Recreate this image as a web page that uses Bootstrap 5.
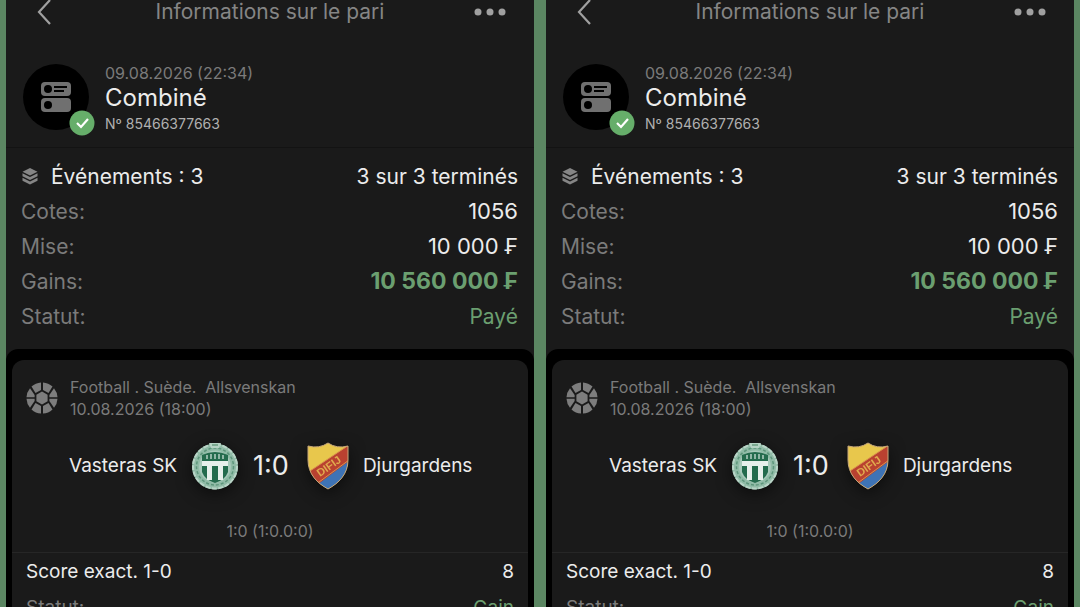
<!DOCTYPE html>
<html lang="fr">
<head>
<meta charset="utf-8">
<meta name="viewport" content="width=device-width, initial-scale=1">
<title>Informations sur le pari</title>
<link href="https://cdn.jsdelivr.net/npm/bootstrap@5.3.0/dist/css/bootstrap.min.css" rel="stylesheet">
<style>
  body { background: #5b8662; font-family: Inter, "Liberation Sans", sans-serif; color: #ececec; }
  .slips { height: 100vh; padding: 0 6px; gap: 12px; }
  .slip { background: #1a1a1a; min-width: 0; }
  .muted { color: #7b7b7b; }
  .win { color: #6b9f70; }
  .topbar { height: 24px; padding: 0 26px; color: #858585; }
  .topbar h1 { font-size: 21px; line-height: 24px; font-weight: 400; }
  .topbar .btn { color: #a0a0a0; width: 36px; height: 24px; --bs-btn-padding-x: 0; --bs-btn-padding-y: 0; border: 0; }
  .bet { padding: 40px 17px 13px; gap: 16px; border-bottom: 1px solid #131313; }
  .avatar { width: 66px; height: 66px; background: #000; }
  .tick { right: -6px; bottom: -6px; }
  .bet-date { font-size: 16px; line-height: 18px; }
  .bet-kind { font-size: 24px; line-height: 32px; }
  .bet-no { font-size: 14px; line-height: 20px; color: #b0b0b0; }
  .totals { padding: 11px 16px 15px 15px; font-size: 21px; line-height: 35px; }
  .amount { font-size: 22px; }
  .payout { font-size: 23px; }
  .events { background: #000; border-radius: 12px 12px 0 0; padding: 11px 6px 0; }
  .event { background: #1a1a1a; border-radius: 12px; }
  .event-head { padding: 16px 14px 0; gap: 12px; font-size: 16px; line-height: 22px; }
  .teams { padding: 20px 12px; gap: 14px; font-size: 19px; line-height: 52px; }
  .crest { filter: drop-shadow(0 4px 8px #0008); }
  .goals { font-size: 27px; }
  .periods { font-size: 16px; line-height: 22px; padding: 8px 0 10px; border-bottom: 1px solid #262626; }
  .pick { padding: 1px 14px 16px; font-size: 19px; line-height: 36px; }
</style>
</head>
<body class="overflow-hidden">
<svg class="position-absolute" width="0" height="0" aria-hidden="true">
  <symbol id="back" viewBox="0 0 16 26"><path d="M14 1 3 13l11 12" fill="none" stroke="currentColor" stroke-width="2.200"/></symbol>
  <symbol id="dots" viewBox="0 0 32 8"><g fill="currentColor"><circle cx="4" cy="4" r="3.500"/><circle cx="16" cy="4" r="3.500"/><circle cx="28" cy="4" r="3.500"/></g></symbol>
  <symbol id="combo" viewBox="0 0 30 30">
    <rect width="30" height="14" rx="4" fill="#707070"/><rect y="16" width="30" height="14" rx="4" fill="#707070"/>
    <circle cx="7" cy="7" r="4"/><circle cx="7" cy="23" r="4"/>
    <path d="M13 5h13M13 9h10" stroke="#000" stroke-width="2"/>
  </symbol>
  <symbol id="check" viewBox="0 0 26 26"><circle cx="13" cy="13" r="12.500" fill="#66ae6a"/><path d="m8 13 4 4 7-8" fill="none" stroke="#fff" stroke-width="2.200"/></symbol>
  <symbol id="layers" viewBox="0 0 16 17"><g fill="#858585"><path d="M8 0 15.500 3.800 8 7.600.5 3.800z"/><path d="M.5 5.200 8 9l7.500-3.800v3L8 12 .5 8.200z"/><path d="M.5 9.700 8 13.500l7.500-3.800v3L8 16.500.5 12.700z"/></g></symbol>
  <symbol id="ball" viewBox="-16 -16 32 32">
    <g fill="#7d7d7d">
      <path d="M0-6.500 5.600-3.200v6.400L0 6.500l-5.600-3.300v-6.400z"/>
      <path d="M1-15.500A15.500 15.500 0 0 1 10.500-11.400L6.500-5 1-8z"/>
      <path d="M-1-15.500A15.500 15.500 0 0 0-10.500-11.400L-6.500-5-1-8z"/>
      <path d="M1 15.500A15.500 15.500 0 0 0 10.500 11.400L6.500 5 1 8z"/>
      <path d="M-1 15.500A15.500 15.500 0 0 1-10.500 11.400L-6.500 5-1 8z"/>
      <path d="M12-9.800A15.500 15.500 0 0 1 15.500-.7L7.400-.7V-3z"/>
      <path d="M12 9.800A15.500 15.500 0 0 0 15.500.7L7.400.7V3z"/>
      <path d="M-12-9.800A15.500 15.500 0 0 0-15.500-.7L-7.400-.7V-3z"/>
      <path d="M-12 9.800A15.500 15.500 0 0 1-15.500.7L-7.400.7V3z"/>
    </g>
  </symbol>
  <symbol id="vasteras" viewBox="0 0 48 48">
    <circle cx="24" cy="24.500" r="23" fill="#8fbba6"/>
    <circle cx="24" cy="24.500" r="22" fill="none" stroke="#b9d4c7" stroke-width="2" stroke-dasharray="5 1.500"/>
    <circle cx="24" cy="24.500" r="18.500" fill="none" stroke="#5d957b" stroke-width="1.500" stroke-dasharray="3 2"/>
    <circle cx="24" cy="24.500" r="16" fill="#a9cabb"/>
    <path d="M11 13q13-6 26 0v17q-3 8-13 11-10-3-13-11z" fill="#246b4d"/>
    <path d="M16 13v4M20 12v5M24 12v5M28 12v5M32 13v4" stroke="#b5d0c3" stroke-width="1.500"/>
    <path d="M11 19h26v5h-5v14h-5V24h-6v14h-5V24h-5z" fill="#e7efeb"/>
    <path d="M18 1h12l-2 5h-8z" fill="#b6d3c4"/><path d="M21 3h6" stroke="#43815f"/>
  </symbol>
  <symbol id="djurgarden" viewBox="0 0 42 48">
    <clipPath id="shield"><path d="M1 4Q12 7 21 1 30 7 41 4V18C41 32 32 41 21 47 10 41 1 32 1 18z"/></clipPath>
    <g clip-path="url(#shield)">
      <path d="M0 0h42v48H0z" fill="#e8c74c"/><path d="M42 12v36H8V38z" fill="#3e73b5"/>
      <path d="M0 31 42 3v16L10 43z" fill="#b94130"/>
      <path d="m0 31 42-28M8 43l34-25" stroke="#d8924c" fill="none"/>
      <text transform="translate(13 35) rotate(-35)" font-family="Liberation Sans, sans-serif" font-size="11" font-weight="700" fill="#e0ab4e">DIFIJ</text>
    </g>
    <path d="M1 4Q12 7 21 1 30 7 41 4V18C41 32 32 41 21 47 10 41 1 32 1 18z" fill="none" stroke="#c7a87a"/>
  </symbol>
</svg>

<main class="slips d-flex overflow-hidden">
  <section class="slip flex-fill w-50">
    <header class="topbar d-flex align-items-center justify-content-between">
      <button class="btn d-flex align-items-center" type="button" aria-label="Retour"><svg class="ms-1" width="16" height="26"><use href="#back"/></svg></button>
      <h1 class="m-0">Informations sur le pari</h1>
      <button class="btn d-flex align-items-center justify-content-center" type="button" aria-label="Plus"><svg width="32" height="8"><use href="#dots"/></svg></button>
    </header>
    <div class="bet d-flex">
      <div class="avatar rounded-circle position-relative d-flex align-items-center justify-content-center flex-shrink-0">
        <svg width="30" height="30"><use href="#combo"/></svg>
        <svg class="tick position-absolute" width="26" height="26"><use href="#check"/></svg>
      </div>
      <div>
        <div class="bet-date muted">09.08.2026 (22:34)</div>
        <div class="bet-kind">Combiné</div>
        <div class="bet-no">Nº 85466377663</div>
      </div>
    </div>
    <dl class="totals m-0">
      <div class="d-flex justify-content-between"><dt class="fw-normal d-flex align-items-center"><svg class="me-2" width="18" height="17"><use href="#layers"/></svg><span class="ms-1">Événements : 3</span></dt><dd class="m-0">3 sur 3 terminés</dd></div>
      <div class="d-flex justify-content-between"><dt class="fw-normal muted">Cotes:</dt><dd class="m-0 amount">1056</dd></div>
      <div class="d-flex justify-content-between"><dt class="fw-normal muted">Mise:</dt><dd class="m-0 amount">10 000 ₣</dd></div>
      <div class="d-flex justify-content-between"><dt class="fw-normal muted">Gains:</dt><dd class="m-0 win payout fw-bold">10 560 000 ₣</dd></div>
      <div class="d-flex justify-content-between"><dt class="fw-normal muted">Statut:</dt><dd class="m-0 win">Payé</dd></div>
    </dl>
    <div class="events">
      <article class="event">
        <div class="event-head d-flex align-items-center muted">
          <svg class="flex-shrink-0" width="32" height="32"><use href="#ball"/></svg>
          <div><div>Football . Suède.&nbsp; Allsvenskan</div><div>10.08.2026 (18:00)</div></div>
        </div>
        <div class="teams d-flex align-items-center">
          <span class="flex-fill w-50 text-end">Vasteras SK</span>
          <svg class="crest flex-shrink-0" width="48" height="48"><use href="#vasteras"/></svg>
          <span class="goals">1:0</span>
          <svg class="crest flex-shrink-0 ms-1" width="42" height="48"><use href="#djurgarden"/></svg>
          <span class="flex-fill w-50">Djurgardens</span>
        </div>
        <div class="periods muted text-center">1:0 (1:0.0:0)</div>
        <dl class="pick m-0">
          <div class="d-flex justify-content-between"><dt class="fw-normal">Score exact. 1-0</dt><dd class="m-0">8</dd></div>
          <div class="d-flex justify-content-between"><dt class="fw-normal muted">Statut:</dt><dd class="m-0 win">Gain</dd></div>
        </dl>
      </article>
    </div>
  </section>

  <section class="slip flex-fill w-50">
    <header class="topbar d-flex align-items-center justify-content-between">
      <button class="btn d-flex align-items-center" type="button" aria-label="Retour"><svg class="ms-1" width="16" height="26"><use href="#back"/></svg></button>
      <h1 class="m-0">Informations sur le pari</h1>
      <button class="btn d-flex align-items-center justify-content-center" type="button" aria-label="Plus"><svg width="32" height="8"><use href="#dots"/></svg></button>
    </header>
    <div class="bet d-flex">
      <div class="avatar rounded-circle position-relative d-flex align-items-center justify-content-center flex-shrink-0">
        <svg width="30" height="30"><use href="#combo"/></svg>
        <svg class="tick position-absolute" width="26" height="26"><use href="#check"/></svg>
      </div>
      <div>
        <div class="bet-date muted">09.08.2026 (22:34)</div>
        <div class="bet-kind">Combiné</div>
        <div class="bet-no">Nº 85466377663</div>
      </div>
    </div>
    <dl class="totals m-0">
      <div class="d-flex justify-content-between"><dt class="fw-normal d-flex align-items-center"><svg class="me-2" width="18" height="17"><use href="#layers"/></svg><span class="ms-1">Événements : 3</span></dt><dd class="m-0">3 sur 3 terminés</dd></div>
      <div class="d-flex justify-content-between"><dt class="fw-normal muted">Cotes:</dt><dd class="m-0 amount">1056</dd></div>
      <div class="d-flex justify-content-between"><dt class="fw-normal muted">Mise:</dt><dd class="m-0 amount">10 000 ₣</dd></div>
      <div class="d-flex justify-content-between"><dt class="fw-normal muted">Gains:</dt><dd class="m-0 win payout fw-bold">10 560 000 ₣</dd></div>
      <div class="d-flex justify-content-between"><dt class="fw-normal muted">Statut:</dt><dd class="m-0 win">Payé</dd></div>
    </dl>
    <div class="events">
      <article class="event">
        <div class="event-head d-flex align-items-center muted">
          <svg class="flex-shrink-0" width="32" height="32"><use href="#ball"/></svg>
          <div><div>Football . Suède.&nbsp; Allsvenskan</div><div>10.08.2026 (18:00)</div></div>
        </div>
        <div class="teams d-flex align-items-center">
          <span class="flex-fill w-50 text-end">Vasteras SK</span>
          <svg class="crest flex-shrink-0" width="48" height="48"><use href="#vasteras"/></svg>
          <span class="goals">1:0</span>
          <svg class="crest flex-shrink-0 ms-1" width="42" height="48"><use href="#djurgarden"/></svg>
          <span class="flex-fill w-50">Djurgardens</span>
        </div>
        <div class="periods muted text-center">1:0 (1:0.0:0)</div>
        <dl class="pick m-0">
          <div class="d-flex justify-content-between"><dt class="fw-normal">Score exact. 1-0</dt><dd class="m-0">8</dd></div>
          <div class="d-flex justify-content-between"><dt class="fw-normal muted">Statut:</dt><dd class="m-0 win">Gain</dd></div>
        </dl>
      </article>
    </div>
  </section>
</main>
<script src="https://cdn.jsdelivr.net/npm/bootstrap@5.3.0/dist/js/bootstrap.bundle.min.js"></script>
</body>
</html>
